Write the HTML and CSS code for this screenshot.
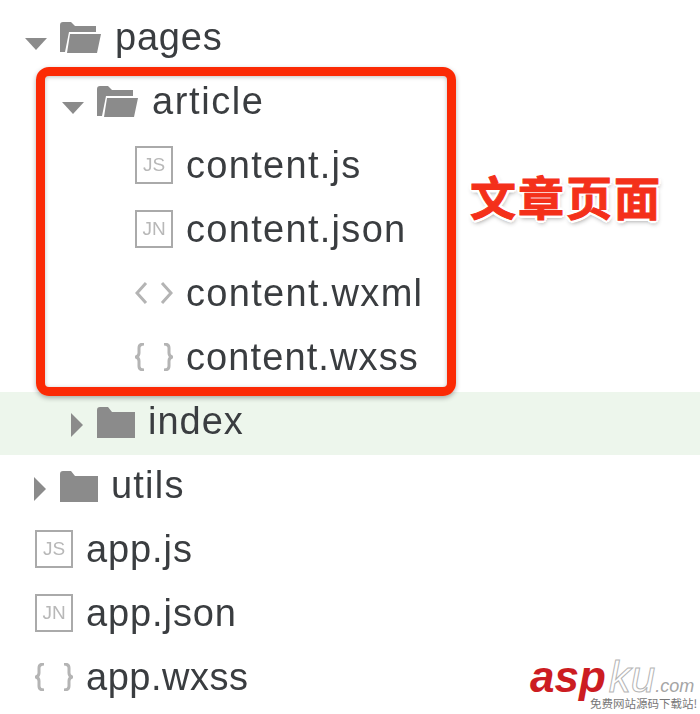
FILE: index.html
```html
<!DOCTYPE html>
<html lang="zh">
<head>
    <meta charset="UTF-8">
    <meta name="viewport" content="width=device-width, initial-scale=1.0">
    <title>文章页面</title>
    <link rel="stylesheet" href="styles.css">
</head>
<body>
    <svg class="defs" width="0" height="0">
        <symbol id="arrow-open" viewBox="0 0 22 12"><path d="M0 0H22L11 12Z"/></symbol>
        <symbol id="arrow-closed" viewBox="0 0 12 24"><path d="M0 0L12 12L0 24Z"/></symbol>
        <symbol id="folder-open" viewBox="0 0 41 31"><path d="M0 3Q0 0 3 0H11L15 4H36V10H9L5 30H0ZM10 12H41L37 31H7Z"/></symbol>
        <symbol id="folder-closed" viewBox="0 0 38 31"><path d="M0 3Q0 0 3 0H11L15 5H38V31H0Z"/></symbol>
        <symbol id="tag" viewBox="0 0 38 24"><path d="M11 2L2 12L11 22M27 2L36 12L27 22" fill="none" stroke="#b4b4b4" stroke-width="3"/></symbol>
        <symbol id="brace" viewBox="0 0 38 28"><path d="M9 1Q4 1 4 5V10Q4 13 1 14Q4 15 4 18V23Q4 27 9 27M29 1Q34 1 34 5V10Q34 13 37 14Q34 15 34 18V23Q34 27 29 27" fill="none" stroke="#b4b4b4" stroke-width="3"/></symbol>
    </svg>

    <div class="tree">
        <div class="row lvl-pages">
            <svg class="arrow-open"><use href="#arrow-open"/></svg>
            <svg class="folder-open"><use href="#folder-open"/></svg>
            <span>pages</span>
        </div>
        <div class="row lvl-article">
            <svg class="arrow-open"><use href="#arrow-open"/></svg>
            <svg class="folder-open"><use href="#folder-open"/></svg>
            <span>article</span>
        </div>
        <div class="row lvl-content">
            <i class="file-icon">JS</i>
            <span>content.js</span>
        </div>
        <div class="row lvl-content">
            <i class="file-icon">JN</i>
            <span>content.json</span>
        </div>
        <div class="row lvl-content">
            <svg class="code-icon"><use href="#tag"/></svg>
            <span>content.wxml</span>
        </div>
        <div class="row lvl-content">
            <svg class="code-icon"><use href="#brace"/></svg>
            <span class="tight">content.wxss</span>
        </div>
        <div class="row lvl-index active">
            <svg class="arrow-closed"><use href="#arrow-closed"/></svg>
            <svg class="folder-closed"><use href="#folder-closed"/></svg>
            <span>index</span>
        </div>
        <div class="row lvl-utils">
            <svg class="arrow-closed"><use href="#arrow-closed"/></svg>
            <svg class="folder-closed"><use href="#folder-closed"/></svg>
            <span>utils</span>
        </div>
        <div class="row lvl-app">
            <i class="file-icon">JS</i>
            <span>app.js</span>
        </div>
        <div class="row lvl-app">
            <i class="file-icon">JN</i>
            <span>app.json</span>
        </div>
        <div class="row lvl-app">
            <svg class="code-icon"><use href="#brace"/></svg>
            <span class="tight">app.wxss</span>
        </div>
    </div>

    <div class="callout"></div>
    <div class="callout-label">文章页面</div>

    <div class="watermark">
        <span class="wm-asp">asp</span><span class="wm-ku">ku</span><span class="wm-com">.com</span>
        <div class="wm-sub">免费网站源码下载站!</div>
    </div>
</body>
</html>
```

FILE: styles.css
```css
html, body {
    margin: 0;
    padding: 0;
    background: #fff;
}
body {
    position: relative;
    width: 700px;
    height: 714px;
    overflow: hidden;
    font-family: "Liberation Sans", Arial, sans-serif;
    color: #3a3d40;
}
.defs {
    position: absolute;
}
.tree {
    padding-top: 5px;
    filter: blur(0.4px);
}
.row {
    display: flex;
    align-items: center;
    height: 64px;
    box-sizing: border-box;
    font-size: 38px;
    letter-spacing: 0.6px;
    white-space: nowrap;
}
.active {
    background: linear-gradient(#fff 3px, #edf6ec 3px);
    box-shadow: 0 2px 0 #edf6ec;
}
.lvl-pages { padding-left: 25px; letter-spacing: 0.8px; }
.lvl-article { padding-left: 62px; letter-spacing: 1.6px; }
.lvl-content { padding-left: 135px; letter-spacing: 1.3px; }
.lvl-index { padding-left: 71px; letter-spacing: 1px; }
.lvl-utils { padding-left: 34px; letter-spacing: 1.2px; }
.lvl-app { padding-left: 35px; letter-spacing: 0.9px; }
.lvl-content .tight { letter-spacing: 1.1px; }
.lvl-app .tight { letter-spacing: 0.5px; }

svg {
    fill: #8b8b8b;
    flex: none;
}
.arrow-open {
    width: 22px;
    height: 12px;
    margin: 14px 13px 0 0;
}
.arrow-closed {
    width: 12px;
    height: 24px;
    margin: 8px 14px 0 0;
}
.folder-open {
    width: 41px;
    height: 31px;
    margin-right: 14px;
}
.folder-closed {
    width: 38px;
    height: 31px;
    margin: 2px 13px 0 0;
}
.code-icon {
    width: 38px;
    height: 28px;
    margin-right: 13px;
}
.file-icon {
    flex: none;
    display: flex;
    align-items: center;
    justify-content: center;
    width: 38px;
    height: 38px;
    margin-right: 13px;
    box-sizing: border-box;
    border: 2px solid #aaa;
    font-style: normal;
    font-size: 19px;
    letter-spacing: 0;
    color: #b8b8b8;
}
.callout {
    position: absolute;
    left: 36px;
    top: 67px;
    width: 420px;
    height: 329px;
    box-sizing: border-box;
    border: 9px solid #fb2a05;
    border-radius: 13px;
    box-shadow: 0 2px 5px rgba(0, 0, 0, 0.3), inset 0 1px 4px rgba(0, 0, 0, 0.25);
}
.callout-label {
    position: absolute;
    left: 470px;
    top: 162px;
    font-family: "Noto Sans CJK SC", sans-serif;
    font-size: 46px;
    font-weight: 700;
    letter-spacing: 2px;
    line-height: 66px;
    color: #f4301a;
    -webkit-text-stroke: 1px #f4301a;
    text-shadow: 3px 0 0 #fff, -3px 0 0 #fff, 0 3px 0 #fff, 0 -3px 0 #fff, 2px 2px 0 #fff, -2px 2px 0 #fff, 2px -2px 0 #fff, -2px -2px 0 #fff, 1px 3px 5px rgba(0, 0, 0, 0.45);
}
.watermark {
    position: absolute;
    left: 530px;
    top: 652px;
    width: 170px;
    height: 62px;
    white-space: nowrap;
    line-height: 50px;
}
.wm-asp {
    font-size: 44px;
    font-weight: 700;
    font-style: italic;
    color: #cc1c22;
}
.wm-ku {
    font-size: 44px;
    font-style: italic;
    color: #fff;
    -webkit-text-stroke: 1px #b5b5b5;
    margin-left: 3px;
}
.wm-com {
    font-size: 18px;
    font-style: italic;
    color: #a5a5a5;
}
.wm-sub {
    position: absolute;
    left: 60px;
    top: 43px;
    font-family: "Noto Sans CJK SC", sans-serif;
    font-size: 11.5px;
    line-height: 16px;
    color: #777;
    text-shadow: 1px 0 0 #fff, -1px 0 0 #fff, 0 1px 0 #fff, 0 -1px 0 #fff;
}
```
